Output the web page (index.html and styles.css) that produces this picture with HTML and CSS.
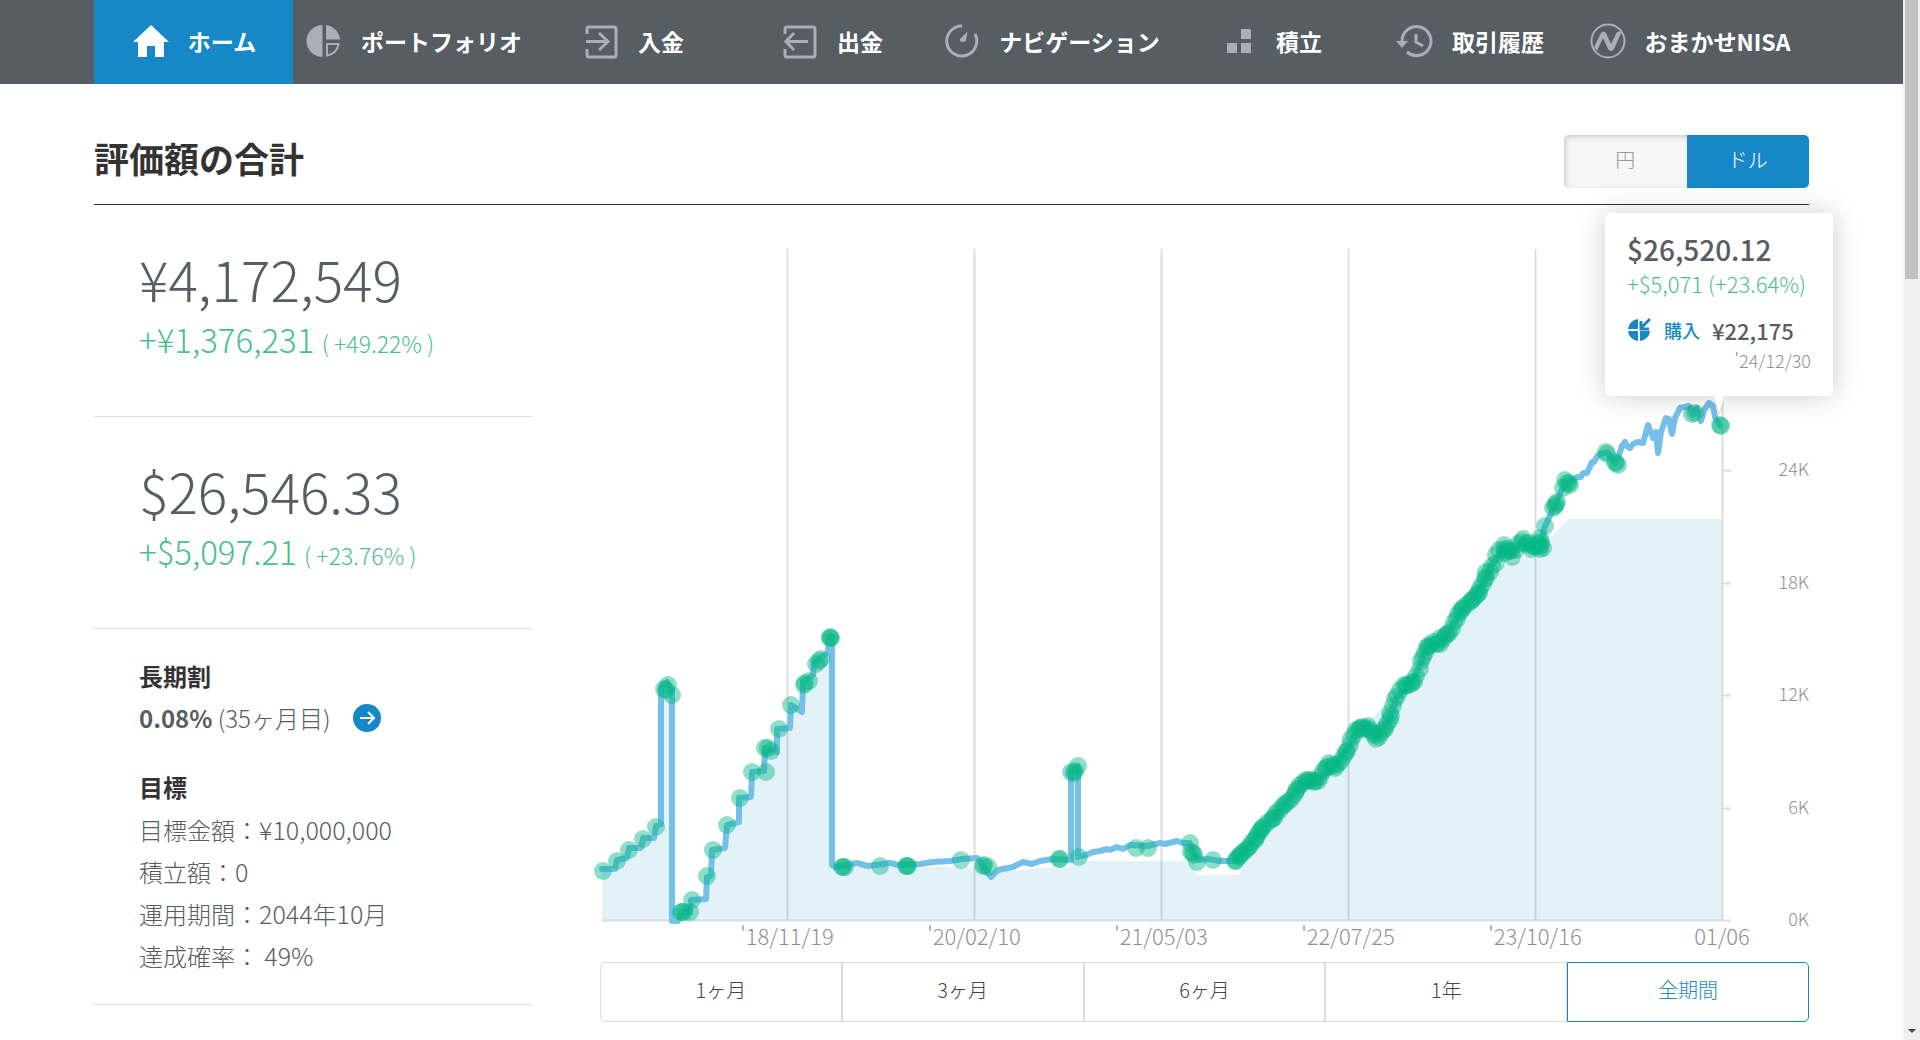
FILE: index.html
```html
<!DOCTYPE html>
<html lang="ja">
<head>
<meta charset="utf-8">
<meta name="viewport" content="width=device-width, initial-scale=1">
<title>評価額の合計</title>
<link rel="stylesheet" href="styles.css">
</head>
<body>
<div class="page">
  <nav class="nav">
    <a class="nav-item active" href="#home"><svg class="nav-icon" viewBox="0 0 40 40"><path fill="#fff" d="M20 4 38 21h-5v15h-9V25h-8v11H7V21H2z"/></svg>ホーム</a>
    <a class="nav-item wide" href="#portfolio"><svg class="nav-icon" viewBox="0 0 40 40"><path fill="currentColor" d="M18.500 4v32a16 16 0 0 1 0-32zM22 4a16 16 0 0 1 14 14.500H22z"/><path fill="none" stroke="currentColor" stroke-width="2" d="M23 23h11.500a13 13 0 0 1-11.500 11.500z"/></svg>ポートフォリオ</a>
    <a class="nav-item" href="#deposit"><svg class="nav-icon" viewBox="0 0 40 40"><path class="line" d="M6 13V8a2 2 0 0 1 2-2h25a2 2 0 0 1 2 2v26a2 2 0 0 1-2 2H8a2 2 0 0 1-2-2v-6M5 20.500h21M18 12l9 8.500-9 8.500"/></svg>入金</a>
    <a class="nav-item" href="#withdraw"><svg class="nav-icon" viewBox="0 0 40 40"><path class="line" d="M5 13V8a2 2 0 0 1 2-2h26a2 2 0 0 1 2 2v26a2 2 0 0 1-2 2H7a2 2 0 0 1-2-2v-6M28 20.500H7M14 12l-8 8.500 8 8.500"/></svg>出金</a>
    <a class="nav-item wide" href="#navigation"><svg class="nav-icon" viewBox="0 0 40 40"><path class="line" d="M20 5a15 15 0 1 0 13 8"/><path fill="currentColor" d="M25.500 10.500 18 18q-1 3 3 3l3-1z"/></svg>ナビゲーション</a>
    <a class="nav-item" href="#saving"><svg class="nav-icon" viewBox="0 0 40 40"><path fill="currentColor" d="M8 22h10v10H8zM22 22h10v10H22zM22 8h10v10H22z"/></svg>積立</a>
    <a class="nav-item" href="#history"><svg class="nav-icon" viewBox="0 0 40 40"><path class="line" d="M7 20a14.500 14.500 0 1 1 5 11M21 13v8l7 4"/><path fill="currentColor" d="M1 20h12l-6 7z"/></svg>取引履歴</a>
    <a class="nav-item wide" href="#nisa"><svg class="nav-icon" viewBox="0 0 40 40"><circle cx="20" cy="20" r="16.500" fill="none" stroke="currentColor" stroke-width="2"/><path fill="currentColor" d="M6 26 13 12q3-3 5 0l5 11 6-12 5-1-8 18q-3 4-6 0l-5-11-6 13z"/></svg>おまかせNISA</a>
  </nav>

  <main class="content">
    <header class="title-row">
      <h1>評価額の合計</h1>
      <div class="toggle">
        <button type="button">円</button>
        <button type="button" class="on">ドル</button>
      </div>
    </header>

    <div class="columns">
      <aside class="summary">
        <section class="amount">
          <p class="total">¥4,172,549</p>
          <p class="gain">+¥1,376,231 <small>( +49.22% )</small></p>
        </section>
        <section class="amount">
          <p class="total">$26,546.33</p>
          <p class="gain">+$5,097.21 <small>( +23.76% )</small></p>
        </section>
        <section class="details">
          <h2>長期割</h2>
          <p class="discount"><span><b>0.08%</b> (35ヶ月目)</span>
            <a href="#discount" aria-label="長期割"><svg class="arrow" viewBox="0 0 28 28"><circle cx="14" cy="14" r="14" fill="#1688c8"/><path fill="none" stroke="#fff" stroke-width="2" d="M7 14h14M15 8l6 6-6 6"/></svg></a></p>
          <h2>目標</h2>
          <ul>
            <li>目標金額：<span class="num">¥10,000,000</span></li>
            <li>積立額：<span class="num">0</span></li>
            <li>運用期間：<span class="num">2044</span>年<span class="num">10</span>月</li>
            <li>達成確率： <span class="num">49%</span></li>
          </ul>
        </section>
      </aside>

      <section class="chart">
        <svg class="plot" viewBox="600 205 1209 757" role="img" aria-label="評価額の推移">
          <defs>
            <marker id="trade" markerUnits="userSpaceOnUse" markerWidth="20" markerHeight="20" refX="10" refY="10">
              <circle cx="10" cy="10" r="9" fill="#06b886" fill-opacity=".45"/>
            </marker>
          </defs>
          <path class="grid" d="M787.500 249V920M974.500 249V920M1161.500 249V920M1348.500 249V920M1535.500 249V920M1722.500 249V920"/>
          <path class="grid" d="M602 920.500H1731M1722 808.500h9M1722 695.500h9M1722 583.500h9M1722 470.500h9"/>
          <path class="area" d="M602 920V869H615L617 860 627 858 629 848H641L643 838H654L656 826 661 824V688L667 682 672 690V920H680L690 912 692 900H706L709 877 712 851H725L728 825 739 822V798H752V772H765V748H777V729H791V706H803V682L813 677 816 663 829 652V637H832V868L860 867H980L1000 872 1040 868H1070V770H1078V861H1194L1197 875H1238L1262 838 1290 803 1310 784 1340 765 1352 737 1380 710 1397 705 1428 655 1460 622 1500 568 1533 554 1552 536 1568 519H1722V920z"/>
          <polyline class="value" points="602,869 615,869 617,860 627,858 629,848 641,848 643,838 654,838 656,826 661,824 661,688 667,682 672,690 672,921 678,921 682,912 690,912 691,900 706,899 707,877 711,876 712,850 725,848 727,825 739,822 739,798 751,797 752,772 764,771 765,748 777,752 777,729 790,728 791,705 802,712 803,682 813,675 814,663 828,652 829,637 832,637 832,865 836,867 857,863 868,866 890,863 898,865 920,864 933,862 950,861 962,859 977,858 983,865 991,877 998,870 1013,867 1023,862 1032,864 1040,861 1053,859 1071,860 1071,772 1078,767 1078,857 1086,855 1093,852 1100,851 1107,849 1110,850 1117,847 1123,849 1130,845 1147,846 1160,843 1165,844 1177,841 1183,843 1190,843 1193,852 1198,860 1208,859 1220,861 1235,861 1257,837 1278,812 1300,785 1317,781 1335,766 1350,745 1358,728 1367,727 1377,737 1390,718 1396,698 1413,681 1427,648 1442,643 1460,613 1482,587 1490,568 1504,548 1512,556 1523,540 1532,547 1541,542 1545,526 1555,505 1563,487 1568,483 1577,477 1581,477 1583,473 1587,473 1592,462 1594,462 1598,455 1607,452 1615,463 1618,458 1622,446 1625,442 1627,446 1630,448 1633,444 1638,442 1643,443 1648,425 1653,438 1656,432 1658,453 1661,432 1666,418 1669,419 1672,434 1675,418 1680,408 1689,406 1693,415 1697,408 1701,421 1704,410 1709,403 1713,406 1715,417 1720,425"/>
          <polyline class="trades" points="603,871 617,861 629,850 643,839 656,827 664,689 668,685 672,695 666,690 681,912 684,912 682,912 690,912 692,900 707,876 713,850 727,825 740,798 752,772 766,772 765,748 771,751 768,748 779,729 791,705 804,685 809,681 805,683 816,664 821,659 819,661 830,637 831,638 830,638 842,867 845,867 843,867 880,866 906,866 908,866 907,866 961,860 983,866 988,867 984,865 1059,859 1060,859 1071,772 1075,771 1074,773 1078,766 1079,857 1136,848 1148,848 1190,843 1191,852 1194,855 1193,853 1197,862 1213,860"/>
          <polyline class="trades" points="1235,861 1236,861 1238,857 1241,854 1243,852 1246,850 1250,846 1252,842 1255,840 1257,836 1259,832 1261,830 1263,827 1267,823 1271,820 1274,818 1276,813 1279,811 1282,807 1286,803 1289,801 1292,798 1295,794 1297,789 1300,785 1303,783 1306,780 1309,780 1312,780 1315,781 1318,781 1320,777 1323,771 1327,767 1329,763 1332,765 1335,768 1338,764 1341,761 1344,756 1347,751 1350,745 1351,739 1354,735 1356,730 1359,729 1362,727 1365,729 1368,726 1370,730 1373,733 1376,739 1379,737 1381,733 1385,729 1387,724 1390,720 1390,713 1393,706 1395,699 1397,696 1400,690 1404,685 1407,685 1411,684 1414,682 1416,676 1420,669 1421,661 1423,657 1425,653 1427,647 1430,645 1433,642 1436,644 1440,644 1440,638 1443,639 1446,635 1449,633 1452,629 1454,622 1457,619 1458,614 1461,611 1463,608 1466,605 1470,602 1473,599 1476,596 1479,593 1480,588 1483,584 1486,578 1486,572 1490,572 1492,566 1496,563 1496,555 1499,550 1504,545 1507,549 1505,553 1511,551 1512,557 1516,550 1518,544 1523,539 1526,544 1529,543 1531,549 1534,546 1538,543 1540,538 1540,549 1543,548 1541,542 1545,526 1553,508 1555,506 1557,502 1556,504 1563,488 1565,480 1567,483 1570,485 1569,483 1606,452 1607,454 1615,462 1618,465 1616,463 1692,414 1695,413 1720,425 1721,426"/>
          <polyline class="trades" points="1240,856 1248,848 1256,838 1262,828 1273,818 1284,805 1296,791 1307,781 1314,782 1326,768 1334,766 1346,752 1360,728 1366,728 1374,735 1384,729 1391,716 1406,686 1412,682 1428,647 1438,643 1447,634 1462,609 1472,600 1478,593 1485,578 1505,549 1507,551 1522,542 1532,546 1536,547 1541,545"/>
          <g class="tick" text-anchor="middle">
            <text x="787" y="945">'18/11/19</text><text x="974" y="945">'20/02/10</text><text x="1161" y="945">'21/05/03</text><text x="1348" y="945">'22/07/25</text><text x="1535" y="945">'23/10/16</text><text x="1722" y="945">01/06</text>
          </g>
          <g class="tick small" text-anchor="end">
            <text x="1809" y="476">24K</text><text x="1809" y="589">18K</text><text x="1809" y="701">12K</text><text x="1809" y="814">6K</text><text x="1809" y="926">0K</text>
          </g>
        </svg>

        <div class="tooltip">
          <p class="tip-value">$26,520.12</p>
          <p class="tip-gain">+$5,071 (+23.64%)</p>
          <p class="tip-trade"><svg class="tip-icon" viewBox="0 0 24 24"><path fill="#1688c8" d="M11 1v10H1A11 11 0 0 1 11 1zM1 13h10v10A11 11 0 0 1 1 13zM13 13h10a11 11 0 0 1-10 10z"/><path fill="none" stroke="#1688c8" stroke-width="3" d="M23 1l-8 8M14 3v8h8"/></svg><span class="tip-kind">購入</span><strong>¥22,175</strong></p>
          <p class="tip-date">'24/12/30</p>
          <svg class="tip-tail" viewBox="0 0 12 20"><path fill="#fff" d="M0 0h12L6 20z"/><path fill="none" stroke="#ddd" d="M0 1l6 18 6-18"/></svg>
        </div>

        <div class="ranges">
          <button type="button">1ヶ月</button>
          <button type="button">3ヶ月</button>
          <button type="button">6ヶ月</button>
          <button type="button">1年</button>
          <button type="button" class="on">全期間</button>
        </div>
      </section>
    </div>
  </main>
</div>
<div class="scrollbar" aria-hidden="true"><div class="thumb"></div><svg class="down" viewBox="0 0 8 4"><path fill="#444" d="M0 0h8L4 4z"/></svg></div>
</body>
</html>
```
FILE: styles.css
```css
* { box-sizing: border-box; }
body {
  margin: 0;
  display: grid;
  grid-template-columns: 1fr 17px;
  min-height: 100vh;
  background: #fff;
  color: #565d63;
  font: 300 24px/42px "Noto Sans CJK JP", "Noto Sans", sans-serif;
}
h1, h2, p, ul { margin: 0; padding: 0; }
ul { list-style: none; }
button { font: inherit; cursor: pointer; }

.nav { display: flex; height: 84px; padding: 0 94px; background: #565d63; }
.nav-item {
  flex: 199 1 0;
  display: flex;
  align-items: center;
  justify-content: center;
  gap: 17px;
  padding-bottom: 3px;
  color: #fff;
  font-size: 23px;
  font-weight: 700;
  text-decoration: none;
  white-space: nowrap;
}
.nav-item.wide { flex-grow: 240; }
.nav-item.active { background: #1688c8; }
.nav-icon { width: 40px; height: 40px; flex: none; color: #a9afb6; }
.line { fill: none; stroke: currentColor; stroke-width: 3; }

.content { padding: 0 94px; }
.title-row {
  display: flex;
  align-items: flex-start;
  justify-content: space-between;
  height: 121px;
  padding-top: 51px;
  border-bottom: 1px solid #333;
}
h1 { color: #333; font-size: 35px; line-height: 46px; font-weight: 700; }
.toggle { display: flex; width: 245px; height: 53px; border-radius: 5px; overflow: hidden; }
.toggle button {
  flex: 1;
  padding: 0 0 4px;
  border: 0;
  background: #f6f6f6;
  box-shadow: inset 2px 2px 5px #ccc;
  color: #999;
  font-size: 20px;
  line-height: 28px;
}
.toggle .on { background: #1688c8; color: #fff; box-shadow: none; }

.columns { display: grid; grid-template-columns: 438fr 1209fr; gap: 68px; }
.amount { height: 212px; padding: 34px 45px 0; border-bottom: 1px solid #ddd; }
.total { font-size: 55px; line-height: 78px; }
.gain { color: #48be8f; font-size: 33px; line-height: 44px; white-space: nowrap; }
.gain small { font-size: 23px; }
.details { padding: 26px 45px 28px; border-bottom: 1px solid #ddd; }
h2 { color: #333; font-size: 24px; line-height: 42px; font-weight: 700; }
.discount { display: flex; align-items: center; gap: 22px; margin-bottom: 27px; }
.discount b { font-weight: 700; }
.discount a { display: flex; }
.arrow { width: 28px; height: 28px; }
.num { font-size: 25px; }
.details li { height: 42px; }

.chart { position: relative; }
.plot { display: block; width: 100%; height: auto; overflow: visible; }
.grid { fill: none; stroke: #ddd; stroke-width: 2; }
.area { fill: #1688c8; fill-opacity: .12; }
.value { fill: none; stroke: #74c0ea; stroke-width: 6; stroke-linejoin: round; stroke-linecap: round; }
.trades { fill: none; stroke: none; marker: url(#trade); }
.tick { fill: #8d9194; font-size: 22px; }
.tick.small { font-size: 18px; }

.ranges { display: flex; height: 60px; }
.ranges button {
  flex: 1;
  padding: 0 0 4px;
  border: 1px solid #ddd;
  background: #fff;
  color: #444;
  font-size: 20px;
  line-height: 28px;
}
.ranges button:first-child { border-radius: 5px 0 0 5px; }
.ranges button:last-child { border-radius: 0 5px 5px 0; }
.ranges .on { border-color: #1688c8; color: #1688c8; }

.tooltip {
  position: absolute;
  top: 8px;
  right: -24px;
  width: 228px;
  height: 183px;
  padding: 17px 22px 0;
  border-radius: 5px;
  background: #fff;
  box-shadow: 0 0 28px rgba(0, 0, 0, .2);
  white-space: nowrap;
}
.tip-value { font-size: 28px; line-height: 38px; font-weight: 500; }
.tip-gain { color: #48be8f; font-size: 22px; line-height: 30px; }
.tip-trade { display: flex; align-items: center; margin-top: 15px; font-size: 22px; line-height: 34px; }
.tip-trade strong { font-weight: 500; }
.tip-icon { width: 24px; height: 24px; margin-right: 13px; }
.tip-kind { margin-right: 12px; color: #1688c8; font-size: 18px; font-weight: 500; }
.tip-date { color: #8d9194; font-size: 18px; line-height: 26px; text-align: right; }
.tip-tail { position: absolute; top: 182px; right: 108px; width: 12px; height: 20px; }

.scrollbar {
  display: flex;
  flex-direction: column;
  justify-content: space-between;
  align-items: center;
  height: 100vh;
  padding-bottom: 7px;
  background: #f0f0f0;
}
.thumb { width: 13px; height: 279px; background: #c1c1c1; }
.down { width: 8px; height: 4px; }
```
